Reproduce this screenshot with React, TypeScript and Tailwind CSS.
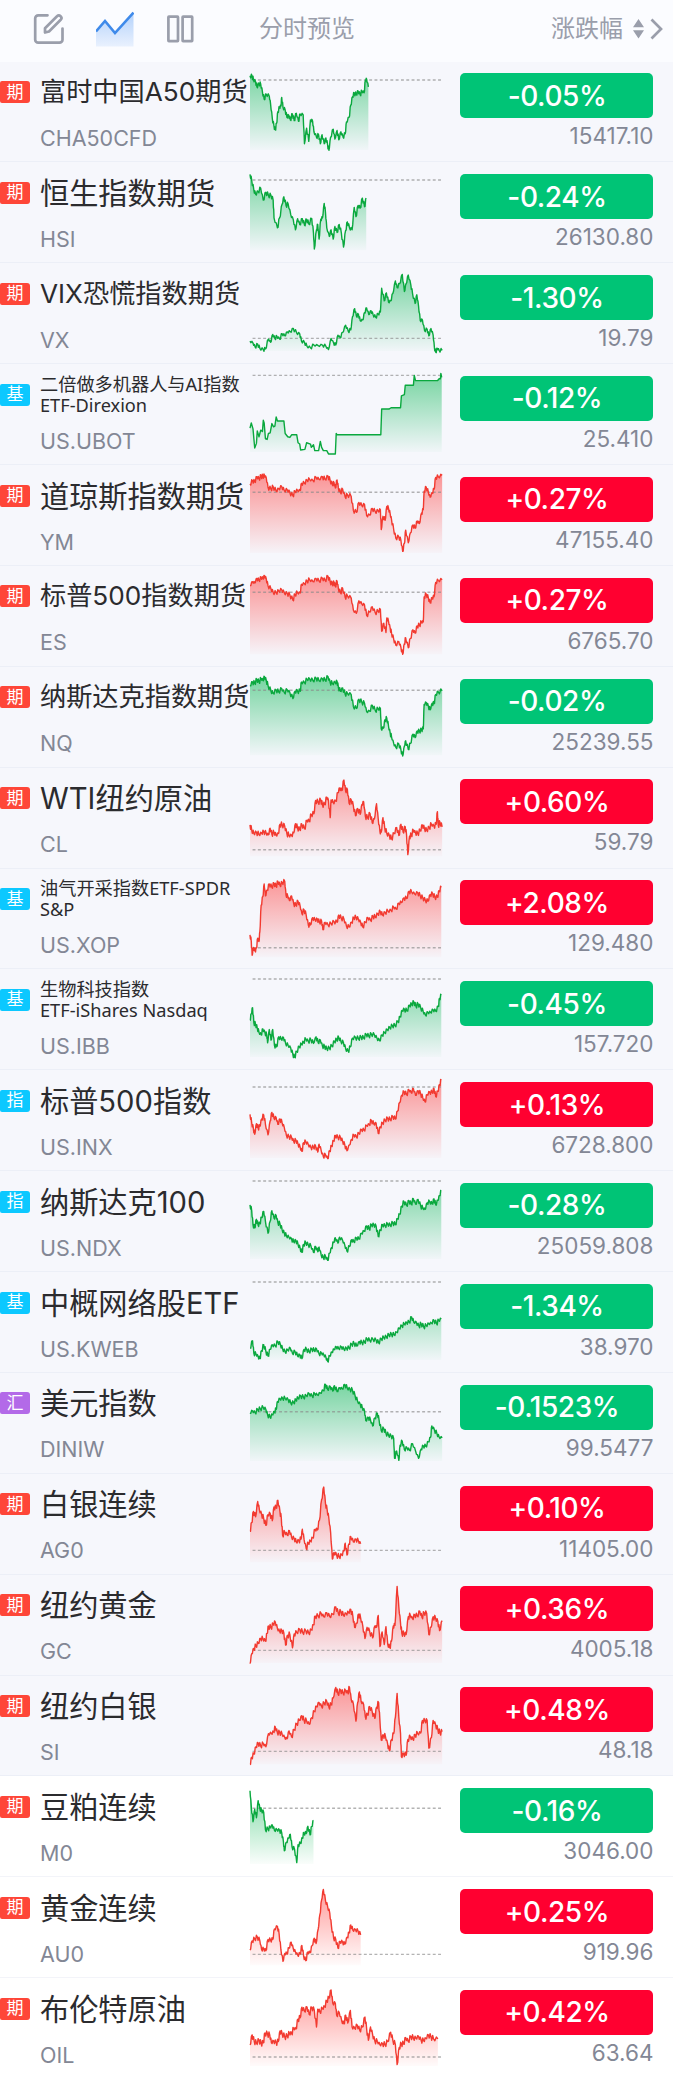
import { useId } from 'react';

type Kind = '期' | '基' | '指' | '汇';

interface Quote {
  kind: Kind;
  name: string;
  size?: 'md' | 'sm';
  code: string;
  change: string;
  price: string;
  // sparkline: y of the row top, y of the previous close, tick noise, key points
  top: number;
  base: number;
  noise?: number;
  line: string;
  white?: boolean;
}

const QUOTES: Quote[] = [
  {
    kind: '期', name: '富时中国A50期货', size: 'md', code: 'CHA50CFD', change: '-0.05%', price: '15417.10',
    top: 184.5, base: 239, noise: 5,
    line: '581,226 586,228 589,238 594,244 597,260 602,250 606,252 610,275 614,297 619,282 626,288 629,312 633,355 637,380 640,390 643,370 646,335 650,322 653,318 655,292 658,322 663,330 667,352 671,345 675,360 680,342 684,362 689,340 694,364 698,342 705,345 708,432 713,385 718,425 722,360 727,364 730,395 736,412 741,405 745,432 749,405 754,432 758,415 762,436 765,452 769,412 775,388 779,418 784,392 788,420 793,396 798,412 803,402 806,366 812,352 816,315 820,290 824,278 829,284 833,272 838,284 842,272 847,278 850,240 853,236 857,260',
  },
  {
    kind: '期', name: '恒生指数期货', code: 'HSI', change: '-0.24%', price: '26130.80',
    top: 6.5, base: 61, noise: 5,
    line: '581,44 585,62 590,92 594,104 600,96 606,86 612,122 618,98 624,108 630,108 635,122 637,176 645,206 650,176 656,134 660,112 665,138 670,134 676,166 682,182 687,212 692,178 697,196 703,178 708,198 713,180 718,194 725,178 729,222 731,270 736,212 739,196 742,240 746,180 750,176 754,132 757,160 760,206 766,232 770,212 775,240 779,202 784,220 789,196 794,222 799,264 804,214 808,188 813,206 819,212 824,144 828,172 833,138 838,146 843,116 848,142 852,116',
  },
  {
    kind: '期', name: 'VIX恐慌指数期货', size: 'md', code: 'VX', change: '-1.30%', price: '19.79',
    top: 309.5, base: 538, noise: 4,
    line: '581,546 588,552 593,564 599,556 604,568 612,572 617,570 624,540 629,550 634,526 639,538 644,532 650,540 656,524 662,530 668,518 675,518 682,508 690,522 697,524 701,546 708,550 714,562 722,566 730,558 740,560 750,558 758,562 764,572 770,538 776,552 781,558 786,528 791,536 797,520 804,498 810,516 816,512 820,472 825,448 829,470 834,466 838,484 844,482 848,460 853,446 858,466 863,454 868,466 874,474 880,464 885,458 888,386 894,424 899,400 904,428 909,424 914,402 920,364 924,384 930,372 936,344 941,396 945,372 950,346 956,376 960,402 966,432 970,406 974,440 978,484 983,482 988,514 994,510 998,530 1003,508 1008,528 1011,566 1014,580 1018,568 1022,574 1029,574',
  },
  {
    kind: '基', name: '二倍做多机器人与AI指数\nETF-Direxion', size: 'sm', code: 'US.UBOT', change: '-0.12%', price: '25.410',
    top: 11.5, base: 46,
    line: '581,206 584,190 588,208 592,266 596,252 598,214 602,232 606,212 610,216 612,182 614,190 617,238 621,240 624,222 628,220 632,192 636,202 639,200 642,172 645,184 660,184 663,222 669,232 674,234 678,226 690,226 693,250 697,254 699,272 709,270 713,250 722,254 724,264 729,256 732,274 741,274 745,246 748,264 752,274 760,274 764,284 780,284 782,222 784,226 886,226 888,148 905,148 910,144 932,144 934,108 941,104 943,76 962,76 964,46 967,62 1018,62 1022,56 1025,56 1026,40 1028,52',
  },
  {
    kind: '期', name: '道琼斯指数期货', code: 'YM', change: '+0.27%', price: '47155.40',
    top: 314.5, base: 397, noise: 5,
    line: '581,372 587,362 592,366 597,350 602,356 607,348 611,350 615,346 619,354 623,382 630,388 635,380 642,394 648,386 655,380 661,392 668,390 674,398 681,408 686,394 692,392 698,392 701,370 708,370 714,360 720,358 728,362 735,352 742,358 750,350 756,358 763,348 768,362 773,374 777,368 780,384 784,360 787,384 792,398 797,388 803,412 808,404 817,410 822,452 829,458 835,428 842,438 848,434 853,468 860,466 866,446 873,456 880,454 885,450 887,510 891,470 896,482 900,440 904,446 908,464 911,480 916,510 921,536 928,532 933,544 937,576 941,552 944,512 950,550 955,520 961,496 966,506 971,484 976,492 981,460 985,450 987,394 992,382 997,398 1001,412 1006,398 1010,388 1014,352 1020,350 1029,346',
  },
  {
    kind: '期', name: '标普500指数期货', size: 'md', code: 'ES', change: '+0.27%', price: '6765.70',
    top: 2.5, base: 82, noise: 5,
    line: '581,62 587,50 592,54 597,40 602,46 607,38 611,40 615,32 619,42 623,62 630,72 635,82 642,84 648,78 655,74 661,84 668,86 674,90 681,106 686,88 692,84 698,84 701,58 708,56 714,48 720,44 728,50 735,40 742,48 750,40 756,46 763,34 768,50 773,58 777,52 780,64 784,48 787,70 792,84 797,70 803,98 808,92 817,100 822,136 829,146 835,108 842,118 848,120 853,152 860,142 866,126 873,144 880,140 885,134 888,200 893,176 898,204 900,160 904,170 908,192 911,206 916,224 921,242 928,232 933,250 937,270 941,238 944,220 950,250 955,222 961,196 966,206 971,184 976,182 981,172 985,172 987,96 992,88 997,100 1001,114 1006,98 1010,96 1014,52 1020,46 1029,44',
  },
  {
    kind: '期', name: '纳斯达克指数期货', size: 'md', code: 'NQ', change: '-0.02%', price: '25239.55',
    top: 304.5, base: 375, noise: 5,
    line: '581,360 587,350 592,354 597,342 602,350 607,340 611,344 615,334 619,346 623,360 630,378 635,384 642,374 648,380 655,370 661,382 668,374 674,382 681,400 686,378 692,378 698,378 701,350 708,352 714,342 720,340 728,346 735,338 742,346 750,340 756,344 763,334 768,352 773,354 780,352 784,348 787,366 792,378 797,368 803,388 808,384 817,388 822,424 829,430 835,402 842,412 848,414 853,440 860,438 866,420 873,436 880,432 885,430 887,492 892,490 896,464 900,460 904,484 908,506 911,516 916,536 921,548 928,538 933,556 937,574 941,544 944,528 950,554 955,536 961,508 966,518 971,498 976,500 981,494 985,492 987,418 992,412 997,424 1001,434 1006,414 1010,416 1014,388 1020,380 1029,377',
  },
  {
    kind: '期', name: 'WTI纽约原油', code: 'CL', change: '+0.60%', price: '59.79',
    top: 7.5, base: 255, noise: 6,
    line: '581,180 585,196 590,206 596,202 602,210 608,204 613,200 619,206 624,210 628,190 632,208 637,202 642,212 647,206 651,178 656,180 662,184 667,206 672,212 678,212 683,204 687,176 692,190 697,194 702,178 708,192 714,166 719,168 724,148 730,146 734,106 740,112 746,104 750,120 755,118 760,96 764,106 768,158 770,104 775,112 781,108 786,82 790,68 795,76 800,44 804,78 808,72 812,114 817,104 822,122 827,152 832,130 838,148 842,118 846,110 850,154 855,158 861,146 866,174 871,162 876,116 880,162 884,200 887,202 891,158 895,188 900,206 906,212 911,222 917,206 923,188 928,212 933,178 938,202 943,186 946,210 949,270 953,214 957,212 962,196 967,204 972,206 978,198 983,180 988,192 993,196 999,188 1004,178 1010,184 1015,178 1018,140 1020,182 1024,172 1029,186',
  },
  {
    kind: '基', name: '油气开采指数ETF-SPDR\nS&P', size: 'sm', code: 'US.XOP', change: '+2.08%', price: '129.480',
    top: 310.5, base: 549, noise: 5,
    line: '581,510 584,530 586,572 589,548 593,560 596,550 599,520 602,530 604,500 607,420 611,394 614,356 617,392 621,374 626,356 632,366 637,354 642,364 646,348 651,360 656,352 662,348 665,390 669,392 673,406 678,392 683,416 688,420 693,408 698,424 702,446 707,434 712,450 717,480 722,480 727,458 733,466 738,462 743,472 748,468 751,494 756,472 763,480 770,476 777,470 784,472 788,450 794,460 800,462 806,484 812,486 818,472 823,458 828,456 834,464 839,472 844,486 850,472 856,458 862,466 868,454 873,456 879,446 885,440 890,450 896,442 903,438 910,436 916,426 922,432 928,414 934,412 940,398 946,400 952,378 958,380 965,386 972,382 978,392 984,398 990,406 996,408 1001,388 1007,386 1012,396 1018,396 1022,376 1027,366',
  },
  {
    kind: '基', name: '生物科技指数\nETF-iShares Nasdaq', size: 'sm', code: 'US.IBB', change: '-0.45%', price: '157.720',
    top: 12.5, base: 43, noise: 5,
    line: '581,168 584,148 587,130 590,176 594,180 598,192 602,204 607,212 611,194 616,206 620,212 622,236 626,196 630,228 634,196 638,244 643,248 648,218 654,226 659,220 664,238 670,244 676,252 681,272 685,280 690,262 696,248 701,240 706,234 711,224 717,232 723,226 729,238 735,218 740,236 745,228 750,246 755,248 760,254 766,252 772,246 778,232 783,226 788,220 793,232 799,236 804,254 810,262 815,248 820,222 827,220 834,224 840,218 846,222 852,210 858,216 864,210 871,212 877,222 883,230 889,212 895,206 901,196 907,190 913,184 919,184 926,172 931,158 936,138 941,134 947,140 953,122 958,120 963,112 968,126 973,118 979,130 985,142 990,152 996,144 1002,144 1008,136 1014,140 1020,126 1023,102 1027,92',
  },
  {
    kind: '指', name: '标普500指数', code: 'US.INX', change: '+0.13%', price: '6728.800',
    top: 315.5, base: 367, noise: 5,
    line: '581,450 585,476 589,494 592,510 596,478 600,492 604,486 608,464 613,452 617,480 623,512 628,470 632,444 637,462 642,460 646,480 651,464 656,476 661,490 666,514 672,518 678,520 683,532 688,528 693,540 698,550 702,562 706,536 711,532 717,542 723,550 729,550 734,546 739,564 742,540 747,560 752,578 757,572 762,584 767,560 771,546 776,530 780,514 786,520 792,520 797,532 802,542 807,560 813,542 818,526 823,512 829,518 835,508 841,496 847,498 853,484 859,480 864,468 870,480 875,476 880,508 885,488 890,476 896,468 902,462 908,466 914,456 920,464 925,440 930,414 935,392 940,380 946,390 952,376 957,384 962,372 967,392 973,378 979,388 984,400 989,412 994,390 1000,382 1006,384 1010,372 1014,396 1019,380 1023,360 1027,346',
  },
  {
    kind: '指', name: '纳斯达克100', code: 'US.NDX', change: '-0.28%', price: '25059.808',
    top: 17.5, base: 48, noise: 5,
    line: '581,120 585,138 588,180 592,190 596,164 600,182 604,176 608,158 613,140 617,170 623,206 628,170 632,138 637,160 642,152 646,174 651,178 656,196 661,206 666,214 672,218 678,224 683,232 688,228 693,240 698,252 702,264 706,240 711,234 717,242 723,244 729,264 734,246 739,262 742,248 747,272 752,280 757,276 762,288 767,266 771,250 776,234 780,220 786,236 790,218 797,228 802,242 807,260 813,246 818,226 823,232 829,220 835,224 841,206 847,200 853,184 859,194 864,180 870,182 875,184 880,216 885,196 890,180 896,184 902,178 908,182 914,174 920,180 925,162 930,148 935,124 940,110 946,122 952,108 957,118 962,102 967,118 973,104 979,124 984,130 989,134 994,114 1000,110 1006,118 1010,102 1014,120 1019,106 1023,92 1027,76',
  },
  {
    kind: '基', name: '中概网络股ETF', code: 'US.KWEB', change: '-1.34%', price: '38.970',
    top: 319.5, base: 350, noise: 5,
    line: '581,550 587,528 590,566 595,568 600,576 604,582 608,558 613,540 618,560 623,574 628,554 633,540 640,544 646,530 652,540 657,552 663,562 669,556 675,550 680,566 686,560 692,574 697,570 702,582 707,554 713,554 719,562 725,552 731,558 736,552 742,568 748,566 753,570 758,578 762,590 767,574 772,562 777,554 782,546 788,552 794,546 800,554 806,550 812,550 818,538 824,536 830,544 836,530 842,534 848,532 854,522 860,526 868,524 875,526 881,534 887,522 893,518 899,516 905,510 911,508 917,510 923,502 929,490 935,482 941,478 946,472 952,472 958,456 963,472 969,472 975,484 980,476 986,486 992,482 998,476 1004,474 1010,466 1016,476 1021,466 1027,462',
  },
  {
    kind: '汇', name: '美元指数', code: 'DINIW', change: '-0.1523%', price: '99.5477',
    top: 7.5, base: 125, noise: 5,
    line: '581,128 587,122 593,128 599,118 605,116 612,112 618,118 622,134 628,142 633,134 638,124 642,118 645,94 651,86 657,84 663,84 670,88 676,98 683,98 688,88 693,84 699,76 706,82 712,76 719,70 726,78 732,70 738,74 745,68 752,60 757,42 762,58 768,48 774,62 778,46 784,64 790,52 796,56 802,42 808,54 814,56 820,60 826,76 832,94 838,102 843,114 848,122 851,152 857,142 862,150 867,168 872,144 878,130 882,150 887,182 893,176 898,190 904,196 910,198 916,206 918,266 923,244 928,272 931,226 936,214 941,240 947,234 953,242 960,222 967,244 974,266 980,238 985,228 991,230 997,216 1002,202 1005,168 1011,180 1017,192 1022,202 1029,204',
  },
  {
    kind: '期', name: '白银连续', code: 'AG0', change: '+0.10%', price: '11405.00',
    top: 310.5, base: 542, noise: 6,
    line: '581,484 585,458 589,424 594,440 599,394 603,420 608,432 613,446 618,466 623,434 628,430 633,452 637,410 642,414 646,390 651,426 654,444 657,496 662,486 668,496 673,482 678,502 684,506 689,516 695,512 700,508 703,478 707,508 712,536 717,520 722,514 727,504 733,478 738,480 743,450 748,388 753,350 757,400 761,420 765,446 769,488 773,568 777,548 783,556 789,562 795,556 800,544 803,520 807,556 812,522 816,500 822,516 828,508 834,514 839,522',
  },
  {
    kind: '期', name: '纽约黄金', code: 'GC', change: '+0.36%', price: '4005.18',
    top: 13.5, base: 242, noise: 6,
    line: '581,282 585,252 590,236 595,228 600,220 606,206 611,206 617,214 621,190 624,168 630,174 635,162 640,156 645,176 650,184 655,182 660,190 664,226 669,196 674,194 680,234 684,192 690,188 697,178 704,188 711,182 718,190 724,180 729,164 733,138 740,138 747,130 753,140 760,128 767,140 774,132 781,110 787,130 793,124 799,136 805,130 811,128 816,118 821,140 825,172 830,160 834,132 839,144 844,168 849,206 854,172 860,184 867,204 872,168 876,172 880,136 884,230 889,186 894,224 898,170 902,222 907,234 911,214 915,168 919,166 924,48 928,110 932,160 935,190 940,192 945,194 950,140 955,136 960,146 965,134 971,138 977,124 982,142 987,128 993,130 998,194 1003,172 1008,140 1014,146 1019,154 1023,182 1029,152',
  },
  {
    kind: '期', name: '纽约白银', code: 'SI', change: '+0.48%', price: '48.18',
    top: 315.5, base: 544, noise: 6,
    line: '581,584 585,562 590,552 595,530 600,518 606,528 612,520 618,530 624,490 631,490 636,484 640,470 645,488 650,486 656,492 662,502 667,506 672,482 678,500 684,478 690,460 696,450 702,436 707,450 713,452 719,462 725,442 731,422 736,408 742,396 748,408 754,398 760,392 765,410 770,402 775,382 781,350 786,370 792,358 798,368 804,360 809,366 813,350 817,386 822,400 828,452 832,396 836,364 840,392 846,402 850,440 855,434 860,408 866,424 872,444 876,410 881,396 884,452 887,510 892,494 897,500 902,522 906,542 911,508 916,490 920,440 924,368 928,440 932,490 934,560 939,550 945,556 949,508 955,500 961,508 966,494 972,490 979,488 983,450 989,452 994,450 998,534 1004,502 1008,450 1014,464 1019,478 1024,488 1029,484',
  },
  {
    kind: '期', name: '豆粕连续', code: 'M0', change: '-0.16%', price: '3046.00', white: true,
    top: 17.5, base: 115, noise: 5,
    line: '581,62 584,110 588,156 592,118 596,144 600,92 604,116 608,122 613,128 617,180 623,178 628,174 633,166 638,182 644,180 650,182 655,190 659,218 661,244 666,218 671,206 675,194 679,232 685,240 690,280 693,226 699,222 703,204 707,190 712,192 716,170 721,196 725,170 729,152',
  },
  {
    kind: '期', name: '黄金连续', code: 'AU0', change: '+0.25%', price: '919.96', white: true,
    top: 320.5, base: 555, noise: 5,
    line: '581,542 586,514 592,508 598,502 604,514 608,540 613,538 618,544 623,510 629,512 634,510 638,478 645,470 649,494 653,540 658,576 662,552 667,552 672,536 677,518 682,538 687,548 692,556 698,554 702,528 706,560 711,574 716,548 721,550 726,528 731,506 735,522 740,478 744,434 748,390 752,358 757,392 762,410 767,430 771,470 776,506 781,510 786,536 791,516 797,518 802,524 808,502 812,490 816,466 821,482 827,480 833,484 839,496',
  },
  {
    kind: '期', name: '布伦特原油', code: 'OIL', change: '+0.42%', price: '63.64', white: true,
    top: 623.5, base: 863, noise: 6,
    line: '581,826 586,796 591,816 596,820 602,812 607,822 612,820 616,790 622,794 627,796 631,820 636,814 642,820 647,816 651,784 656,792 662,802 668,800 673,790 678,792 683,776 688,778 693,748 698,744 702,712 708,724 714,712 719,734 725,712 731,722 736,772 739,718 744,726 750,716 755,710 760,692 765,684 770,660 774,700 780,700 783,736 789,728 795,754 800,762 804,736 809,760 815,722 819,772 825,776 831,766 837,782 843,772 849,742 853,778 857,812 862,772 867,796 872,814 878,816 884,826 890,822 896,826 902,816 909,788 914,812 920,826 924,886 929,834 934,822 939,824 944,804 950,816 956,800 962,806 968,806 974,800 980,812 986,814 991,806 997,796 1003,802 1009,808 1019,808',
  },
];

const KIND_BG: Record<Kind, string> = {
  期: 'bg-[#fe4638]',
  基: 'bg-[#0cc8ff]',
  指: 'bg-[#0cc8ff]',
  汇: 'bg-[#b36ae8]',
};

const NAME_SIZE = {
  lg: 'text-[29.2px] leading-[40px] pt-[11.5px]',
  md: 'text-[26.2px] leading-[40px] pt-[10.5px]',
  sm: "font-['Noto_Sans','Noto_Sans_CJK_SC',sans-serif] text-[18.2px] leading-[21px] pt-[9.5px]",
};

// fills the gaps between key points with small ticks
function trace(line: string, noise: number) {
  const pts = line.split(' ').map(p => p.split(',').map(Number));
  if (!noise) return pts.map(p => p.join(',')).join(' ');
  const out: string[] = [];
  pts.forEach(([x, y], i) => {
    out.push(`${x},${y}`);
    const next = pts[i + 1];
    if (!next) return;
    const wave = (0.6 + 0.8 * Math.abs(Math.sin(x * 12.9898 + y * 4.1414))) * noise;
    out.push(`${x + (next[0] - x) * 0.3},${y + (next[1] - y) * 0.3 + wave}`);
    out.push(`${x + (next[0] - x) * 0.65},${y + (next[1] - y) * 0.65 - wave}`);
  });
  return out.join(' ');
}

function Sparkline({ quote, up }: { quote: Quote; up: boolean }) {
  const id = useId();
  const { top, base, line, noise = 0 } = quote;
  const color = up ? '#f23a30' : '#0aa83e';
  const fill = up ? '#ff3a38' : '#00b44c';
  const bottom = top + 267;
  const endX = line.split(' ').pop()!.split(',')[0];
  const points = trace(line, noise);
  return (
    <svg
      className="block h-full w-[193px] shrink-0 overflow-visible"
      viewBox={`581 ${top} 450 302.6`}
      preserveAspectRatio="none"
      fill="none"
    >
      <defs>
        <linearGradient id={id} gradientUnits="userSpaceOnUse" x1="0" y1={top + 30} x2="0" y2={bottom}>
          <stop offset="0" stopColor={fill} stopOpacity="0.52" />
          <stop offset="1" stopColor={fill} stopOpacity="0.02" />
        </linearGradient>
      </defs>
      <polygon points={`581,${bottom} ${points} ${endX},${bottom}`} fill={`url(#${id})`} />
      <line
        x1="587" x2="1030" y1={base} y2={base}
        stroke="#8a8a8a" strokeOpacity="0.65" strokeWidth="1.4" strokeDasharray="2.9 2.4"
        vectorEffect="non-scaling-stroke"
      />
      <polyline
        points={points}
        stroke={color} strokeWidth="1.4" strokeLinejoin="round"
        vectorEffect="non-scaling-stroke"
      />
    </svg>
  );
}

function Row({ quote }: { quote: Quote }) {
  const up = quote.change.startsWith('+');
  return (
    <div
      className={`flex h-[100.88px] shrink-0 border-b ${
        quote.white ? 'bg-white border-[#f3f4f9]' : 'bg-[#f6f7fc] border-[#eceff7]'
      }`}
    >
      <div
        className={`mt-[19.5px] flex h-[22px] w-[30px] shrink-0 items-center justify-center rounded-r-[3px] rounded-l-[2px] text-[17px] leading-none text-white ${KIND_BG[quote.kind]}`}
      >
        {quote.kind}
      </div>
      <div className="flex w-[219.7px] shrink-0 flex-col pl-[10px]">
        <div className={`h-[62.5px] whitespace-pre text-[#2b2b2e] ${NAME_SIZE[quote.size ?? 'lg']}`}>
          {quote.name}
        </div>
        <div className="text-[21.5px] leading-[28px] text-[#838795]">{quote.code}</div>
      </div>
      <Sparkline quote={quote} up={up} />
      <div className="ml-[17.8px] flex w-[193px] shrink-0 flex-col pt-[11.8px]">
        <div
          className={`flex h-[45px] items-center justify-center rounded-[5px] text-[28px] font-medium leading-none tracking-[-0.015em] text-white ${
            up ? 'bg-[#ff0030]' : 'bg-[#00c476]'
          }`}
        >
          {quote.change}
        </div>
        <div className="mt-[4px] text-right text-[22.5px] leading-[28px] text-[#838795]">{quote.price}</div>
      </div>
    </div>
  );
}

function Header() {
  return (
    <div className="flex h-[61.5px] shrink-0 items-center bg-[#fbfcff] pb-[4px] text-[24px] text-[#9a9eab]">
      <svg className="ml-[33px] h-[32px] w-[32px]" viewBox="0 0 32 32" fill="none" stroke="currentColor" strokeWidth="2.7" strokeLinecap="round" strokeLinejoin="round">
        <path d="M14.5 2.3H5.2a3 3 0 0 0-3 3v21.400a3 3 0 0 0 3 3h21.300a3 3 0 0 0 3-3V15.500" />
        <path d="M12 19.500v-4.200L24 3.300a2.500 2.500 0 0 1 3.700 3.500L16 18.500z" />
      </svg>
      <svg className="ml-[31px] h-[36px] w-[38px]" viewBox="0 0 38 36" fill="none">
        <defs>
          <linearGradient id="tab-fill" x1="0" y1="0" x2="0" y2="1">
            <stop offset="0" stopColor="#b4d2fb" />
            <stop offset="1" stopColor="#e9f1fe" />
          </linearGradient>
        </defs>
        <path d="M0 20.500 9 10l10 12L37.500 2v33.500H0z" fill="url(#tab-fill)" />
        <path d="M0 20.500 9 10l10 12L37.500 1.500" stroke="#3f8aea" strokeWidth="2.6" />
      </svg>
      <svg className="ml-[33px] h-[28px] w-[27px]" viewBox="0 0 27 28" fill="none" stroke="currentColor" strokeWidth="2.7" strokeLinejoin="round">
        <rect x="1.400" y="1.700" width="9.600" height="24.400" rx="0.5" />
        <rect x="15.600" y="1.700" width="9.600" height="24.400" rx="0.5" />
      </svg>
      <span className="ml-[65px]">分时预览</span>
      <div className="ml-auto flex items-center">
        <span>涨跌幅</span>
        <svg className="ml-[10px] h-[20px] w-[11px]" viewBox="0 0 11 20" fill="currentColor">
          <path d="M5.500 0 11 8.300H0zM5.500 19.500 0 11.200h11z" />
        </svg>
        <svg className="mr-[10px] ml-[6px] h-[22px] w-[13px]" viewBox="0 0 13 22" fill="none" stroke="currentColor" strokeWidth="2.7">
          <path d="m1.500 1.500 9.500 9.500-9.500 9.500" />
        </svg>
      </div>
    </div>
  );
}

export default function App() {
  return (
    <div className="flex h-[2075px] w-[673px] flex-col overflow-hidden bg-white font-['Inter','Noto_Sans_CJK_SC',sans-serif]">
      <Header />
      {QUOTES.map(q => (
        <Row key={q.code} quote={q} />
      ))}
    </div>
  );
}
